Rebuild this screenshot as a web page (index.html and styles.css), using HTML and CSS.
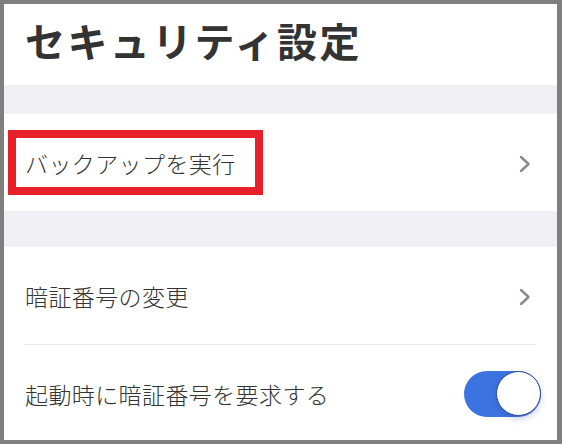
FILE: index.html
```html
<!DOCTYPE html>
<html lang="ja">
<head>
<meta charset="utf-8">
<link rel="stylesheet" href="styles.css">
</head>
<body>
<div class="screen">
  <div class="title">セキュリティ設定</div>
  <div class="band band-top"></div>
  <div class="row row-first">
    <span class="label">バックアップを実行</span>
    <svg class="chev" width="12" height="18" viewBox="0 0 12 18"><polyline points="2,2 9.5,9 2,16" fill="none" stroke="#8a8a8e" stroke-width="2.4" stroke-linecap="round" stroke-linejoin="round"/></svg>
    <div class="highlight"></div>
  </div>
  <div class="band band-mid"></div>
  <div class="row row-sep">
    <span class="label">暗証番号の変更</span>
    <svg class="chev" width="12" height="18" viewBox="0 0 12 18"><polyline points="2,2 9.5,9 2,16" fill="none" stroke="#8a8a8e" stroke-width="2.4" stroke-linecap="round" stroke-linejoin="round"/></svg>
  </div>
  <div class="row row-last">
    <span class="label">起動時に暗証番号を要求する</span>
    <div class="toggle"><div class="knob"></div></div>
  </div>
</div>
</body>
</html>
```
FILE: styles.css
```css
html, body {
  margin: 0;
  padding: 0;
  background: #808080;
}
.screen {
  width: 553px;
  height: 436px;
  border-style: solid;
  border-color: #7f7f7f;
  border-width: 4px 5px 4px 4px;
  background: #ffffff;
  overflow: hidden;
  font-family: "Noto Sans CJK JP", "Noto Sans", sans-serif;
  color: #333333;
  display: flex;
  flex-direction: column;
}
.title {
  height: 81px;
  flex: none;
  display: flex;
  align-items: center;
  padding-left: 21px;
  padding-bottom: 10px;
  box-sizing: border-box;
  font-size: 40px;
  font-weight: 700;
  letter-spacing: 2.4px;
  color: #333333;
}
.band {
  flex: none;
  background: #efeff4;
}
.band-top { height: 29px; }
.band-mid { height: 36px; }
.row {
  position: relative;
  flex: none;
  display: flex;
  align-items: center;
  justify-content: space-between;
  padding: 0 26px 0 21px;
  box-sizing: border-box;
}
.label {
  font-size: 23px;
  font-weight: 300;
  color: #333333;
  letter-spacing: 0.4px;
}
.row-first { height: 97px; }
.row-sep {
  height: 98px;
}
.row-sep::after {
  content: "";
  position: absolute;
  left: 20px;
  right: 21px;
  bottom: 0;
  height: 1px;
  background: #e8e8ea;
}
.row-last {
  flex: 1;
  padding-right: 16px;
  align-items: flex-start;
  padding-top: 26px;
}
.row-last .label { margin-top: 6px; }
.chev { display: block; margin-top: 2px; }
.highlight {
  position: absolute;
  left: 4px;
  top: 16px;
  width: 239px;
  height: 49px;
  border: 8px solid #e8202a;
  pointer-events: none;
}
.toggle {
  position: relative;
  width: 77px;
  height: 46px;
  border-radius: 23px;
  background: #3b73e0;
  flex: none;
}
.knob {
  position: absolute;
  right: 0;
  top: 0;
  width: 43px;
  height: 43px;
  border-radius: 50%;
  background: #ffffff;
  border: 1.5px solid #2c4a8c;
  box-shadow: 0 3px 6px rgba(40, 70, 160, 0.25);
}
```
